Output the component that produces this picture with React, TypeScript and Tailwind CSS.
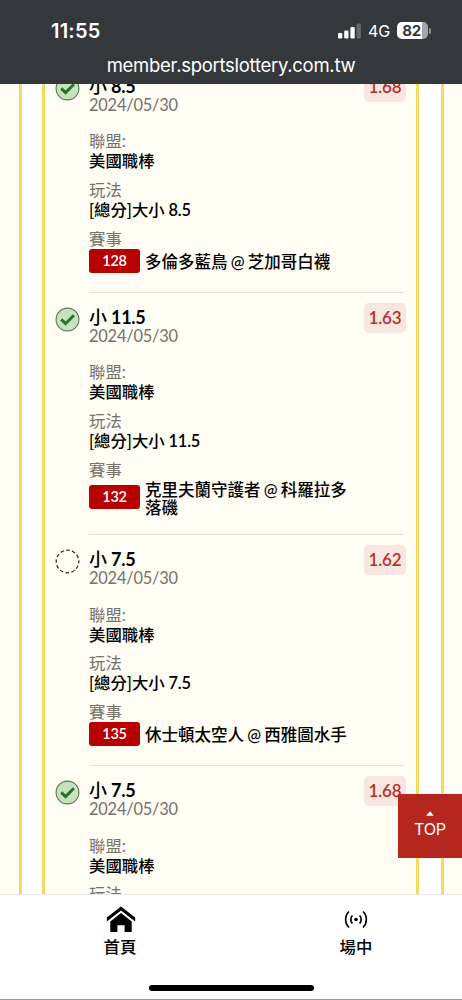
import React from 'react';

type Bet = {
  pick: string;
  odds: string;
  hit: boolean;
  line: string;
  code: string;
  match: string;
};

const bets: Bet[] = [
  { pick: '8.5', odds: '1.68', hit: true, line: '8.5', code: '128', match: '多倫多藍鳥 @ 芝加哥白襪' },
  { pick: '11.5', odds: '1.63', hit: true, line: '11.5', code: '132', match: '克里夫蘭守護者 @ 科羅拉多落磯' },
  { pick: '7.5', odds: '1.62', hit: false, line: '7.5', code: '135', match: '休士頓太空人 @ 西雅圖水手' },
  { pick: '7.5', odds: '1.68', hit: true, line: '7.5', code: '136', match: '' },
];

function HitIcon() {
  return (
    <svg className="size-[25px]" viewBox="0 0 25 25" fill="none">
      <circle cx="12.5" cy="12.5" r="11.4" fill="#c6e3bd" stroke="#557950" strokeWidth="1.1" />
      <path d="M6.2 12.4l4.4 4.2 8.3-8.3" stroke="#2b7329" strokeWidth="2.9" />
    </svg>
  );
}

function PendingIcon() {
  return (
    <svg className="size-[25px]" viewBox="0 0 25 25" fill="none">
      <circle cx="12.5" cy="12.5" r="11.3" stroke="#222" strokeWidth="1.2" strokeDasharray="3.55 2.37" strokeDashoffset="1.7" />
    </svg>
  );
}

function Field({ label, value, amount }: { label: string; value: string; amount?: string }) {
  return (
    <div className="mb-[9px] text-[16.4px]">
      <div className="h-5 leading-5 text-[#73726d]">{label}</div>
      <div className="h-[19.7px] whitespace-pre font-medium leading-[19.7px] text-black">
        {value}
        {amount && <span className="font-semibold tracking-[-0.2px]"> {amount}</span>}
      </div>
    </div>
  );
}

function BetItem({ bet }: { bet: Bet }) {
  return (
    <article className="flex pt-[14px]">
      <div className="w-[34px] shrink-0 pt-[0.5px]">{bet.hit ? <HitIcon /> : <PendingIcon />}</div>
      <div className="w-[315px] border-b border-[#e2e2de]">
        <div className="flex h-[55.7px] items-start justify-between">
          <div>
            <h2 className="h-5 whitespace-nowrap text-[18px] font-medium leading-5 text-black">
              小<span className="font-bold tracking-[-0.3px]"> {bet.pick}</span>
            </h2>
            <p className="-mt-[0.6px] text-[16.4px] leading-5 tracking-[-0.2px] text-[#73726d]">2024/05/30</p>
          </div>
          <div className="-mr-[2px] -mt-[4px] flex h-[30px] w-[42px] items-center justify-center rounded-[5px] bg-[#f8e7e0] text-[17px] font-semibold tracking-[-0.2px] text-[#b7302a]">
            {bet.odds}
          </div>
        </div>
        <Field label="聯盟:" value="美國職棒" />
        <Field label="玩法" value="[總分]大小" amount={bet.line} />
        <div className="h-5 text-[16.4px] leading-5 text-[#73726d]">賽事</div>
        <div className="mb-[19px] flex min-h-6 items-center">
          <span className="mr-[5px] flex h-6 w-[51px] shrink-0 items-center justify-center rounded-[3px] bg-[#b70000] text-[14.5px] font-semibold tracking-[-0.3px] text-white">
            {bet.code}
          </span>
          <span className="-mb-[2px] w-[206px] pt-[1px] text-[16.5px] font-medium leading-[18.1px] text-black [word-spacing:-1px]">
            {bet.match}
          </span>
        </div>
      </div>
    </article>
  );
}

function Header() {
  return (
    <header className="h-[84px] shrink-0 bg-[#35383b] font-['Inter',sans-serif] text-white">
      <div className="flex h-[54px] items-end justify-between pl-[51px] pr-[31px]">
        <span className="h-[34px] text-[20px] font-semibold leading-[22px] tracking-[0.2px]">11:55</span>
        <div className="flex h-[34px] items-start pt-[2px]">
          <svg className="mt-[1px] h-[18px] w-[24px]" viewBox="0 0 24 18">
            <rect x="0" y="10" width="4.3" height="5.5" rx="1.2" fill="#fff" />
            <rect x="6.2" y="7.5" width="4.3" height="8" rx="1.2" fill="#fff" />
            <rect x="12.4" y="4" width="4.3" height="11.5" rx="1.2" fill="#fff" />
            <rect x="18.6" y="0.6" width="4.3" height="14.9" rx="1.2" fill="#66696b" />
          </svg>
          <span className="ml-[6px] w-[24px] whitespace-nowrap text-[16px] leading-[19px]">4G</span>
          <span className="relative ml-[5px] h-[17px] w-[31px] overflow-hidden rounded-[5px] bg-[linear-gradient(to_right,#fff_82%,#a4a6a8_82%)] pr-[2px] text-center text-[15px] font-bold leading-[17px] tracking-[-0.3px] text-[#35383b]">
            82
          </span>
          <span className="ml-px mt-[6px] h-[6px] w-[2px] rounded-r-full bg-[#96989a]" />
        </div>
      </div>
      <div className="text-center text-[18.5px] leading-[23px] tracking-[-0.28px]">member.sportslottery.com.tw</div>
    </header>
  );
}

function Footer() {
  return (
    <nav className="flex h-[106px] shrink-0 flex-col border-b border-t border-b-[#999] border-t-[#e8e8e8] bg-white text-black">
      <div className="flex h-[90px]">
        <div className="flex w-[240px] flex-col items-center">
          <svg className="ml-[2px] mt-[11px] h-[27px] w-[30px]" viewBox="0 0 30 27">
            <path d="M15 0.4L0.8 11.5v4L15 4.5l14.2 11v-4z" />
            <path d="M15 7L4.3 15.5V26H11.4V19.2h7.2V26h7.1V15.5z" />
          </svg>
          <span className="mt-[2px] text-[16.4px] font-medium leading-6">首頁</span>
        </div>
        <div className="flex w-[222px] flex-col items-center pl-[10px]">
          <svg className="mt-[15px] h-[19px] w-[24px]" viewBox="0 0 24 19" fill="none" stroke="#000" strokeWidth="1.7">
            <circle cx="12" cy="9.5" r="1.8" fill="#000" stroke="none" />
            <path d="M8.4 5.5a5.8 5.8 0 0 0 0 8M15.6 5.5a5.8 5.8 0 0 1 0 8M5 1.5a11.2 11.2 0 0 0 0 16M19 1.5a11.2 11.2 0 0 1 0 16" />
          </svg>
          <span className="mt-[6px] text-[16.4px] font-medium leading-6">場中</span>
        </div>
      </div>
      <div className="mx-auto h-[6px] w-[165px] rounded-full bg-black" />
    </nav>
  );
}

export default function App() {
  return (
    <div className="relative flex h-[1000px] w-[462px] flex-col overflow-hidden bg-white font-['Lato','Noto_Sans_CJK_TC',sans-serif]">
      <Header />
      <main className="flex h-[810px] shrink-0">
        <div className="w-[21.5px] border-r-[3px] border-[#f1dc60] bg-[#fffdf4]" />
        <section className="ml-[20.5px] h-[810px] w-[377px] overflow-hidden border-x-[3px] border-[#f1dc60] bg-[#fffdf4]">
          <div className="-mt-[22.4px] pl-[10px]">
            {bets.map((bet, i) => (
              <BetItem key={i} bet={bet} />
            ))}
          </div>
        </section>
        <div className="ml-[22px] flex-1 border-l-[3px] border-[#f1dc60] bg-[#fffdf4]" />
      </main>
      <Footer />
      <button className="absolute bottom-[142px] right-0 flex h-[64px] w-[64px] flex-col items-center bg-[#b5261e] text-white">
        <svg className="mt-[17px] h-[5px] w-[8px]" viewBox="0 0 8 5" fill="currentColor">
          <path d="M4 0.3l3.8 4.4H0.2z" />
        </svg>
        <span className="mt-[2px] font-['Inter',sans-serif] text-[16.2px] leading-[22px] tracking-[-0.3px]">TOP</span>
      </button>
    </div>
  );
}
